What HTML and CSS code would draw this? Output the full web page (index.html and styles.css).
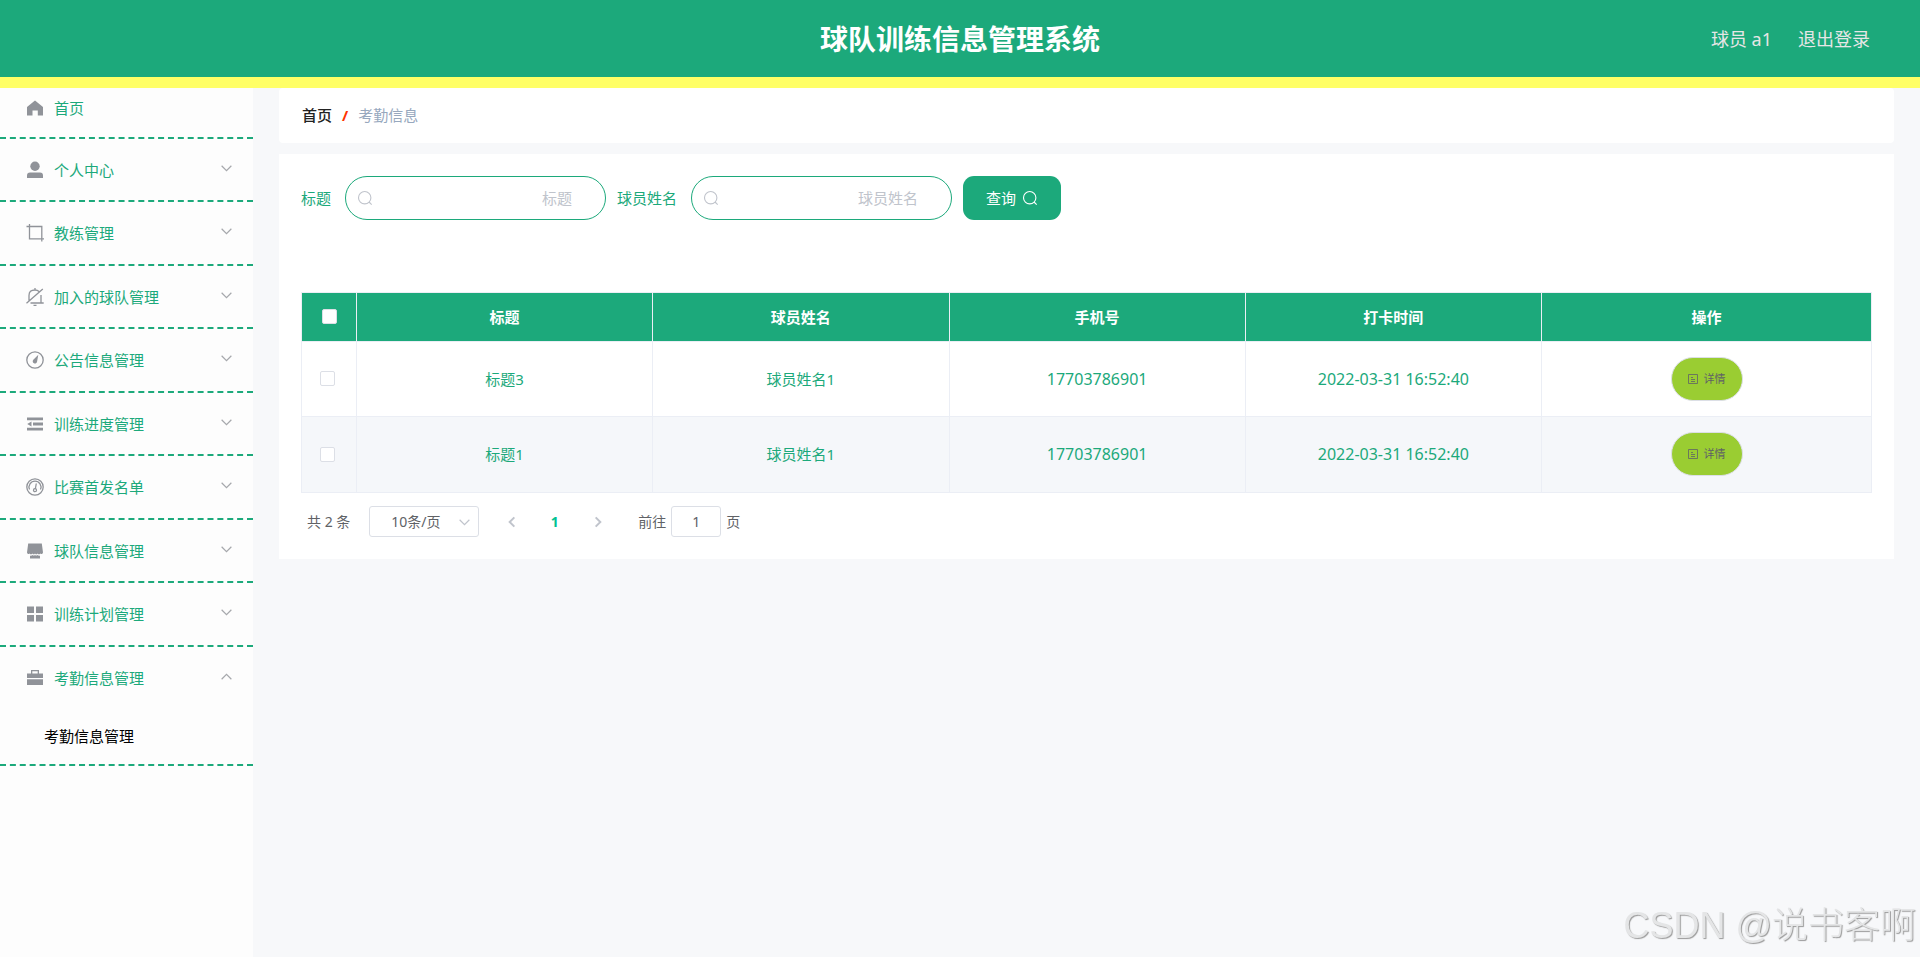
FILE: index.html
```html
<!DOCTYPE html>
<html lang="zh-CN">
<head>
<meta charset="utf-8">
<title>球队训练信息管理系统</title>
<link rel="stylesheet" href="styles.css">
</head>
<body>
<svg class="sprite" aria-hidden="true">
  <symbol id="down" viewBox="0 0 12 12"><path d="M1.500 3.500 6 8l4.500-4.500" fill="none" stroke="currentColor" stroke-width="1.100"/></symbol>
  <symbol id="chev" viewBox="0 0 12 12"><path d="M2 4 6 8l4-4" fill="none" stroke="currentColor" stroke-width="1.700"/></symbol>
  <symbol id="search" viewBox="0 0 16 16"><g fill="none" stroke="currentColor" stroke-width="1.100"><circle cx="7.700" cy="7.700" r="6.200"/><path d="m12 12 2.700 2.700"/></g></symbol>
  <symbol id="doc" viewBox="0 0 10 12"><path d="M.5 1.500h9v9h-9zM3 4.500h2M3 6.500h4M3 8.500h4" fill="none" stroke="currentColor" stroke-width=".8"/></symbol>
</svg>
<header class="header">
  <h1 class="title">球队训练信息管理系统</h1>
  <div class="account"><span>球员 a1</span><a class="logout" href="#">退出登录</a></div>
</header>
<div class="layout">
  <nav class="sidebar">
    <ul class="menu">
      <li class="item"><a class="entry" href="#"><svg class="icon" viewBox="0 0 20 20"><path d="M10 2.500 18 9v8.500h-5.200v-5H7.500v5H2V9z"/></svg><span>首页</span></a></li>
      <li class="item"><a class="entry" href="#"><svg class="icon" viewBox="0 0 20 20"><circle cx="10" cy="6.200" r="4.700"/><path d="M2 18v-2.500Q2 12.500 5 12.500h10q3 0 3 3V18z"/></svg><span>个人中心</span><svg class="arrow"><use href="#down"/></svg></a></li>
      <li class="item"><a class="entry" href="#"><svg class="icon" viewBox="0 0 20 20"><path class="line" d="M1.500 3.500h15.300v15M4.500 1v14.800h14.500"/></svg><span>教练管理</span><svg class="arrow"><use href="#down"/></svg></a></li>
      <li class="item"><a class="entry" href="#"><svg class="icon" viewBox="0 0 20 20"><path class="line" d="M4 14V8.500Q4 3 10 3q2.500 0 4 1.500M16 8v8M5.500 16h13.200M1.500 16.200 17.800 2M10 1v2M8.500 18.300h3"/></svg><span>加入的球队管理</span><svg class="arrow"><use href="#down"/></svg></a></li>
      <li class="item"><a class="entry" href="#"><svg class="icon" viewBox="0 0 20 20"><circle class="line" cx="10" cy="10" r="8.200"/><path d="m13.300 4.800-1.200 6.700a2.200 2.200 0 1 1-3.800-1.700z"/></svg><span>公告信息管理</span><svg class="arrow"><use href="#down"/></svg></a></li>
      <li class="item"><a class="entry" href="#"><svg class="icon" viewBox="0 0 20 20"><path d="M2 3.500h16v2.800H2zM8 8.600h10v2.800H8zM2 13.700h16v2.800H2zM6.500 7.500v5L2.200 10z"/></svg><span>训练进度管理</span><svg class="arrow"><use href="#down"/></svg></a></li>
      <li class="item"><a class="entry" href="#"><svg class="icon" viewBox="0 0 20 20"><circle class="line" cx="10" cy="10" r="8.200"/><path class="line" d="M4.500 12.500a6 6 0 1 1 11 0M11.300 6.500 10.300 12"/><circle class="line" cx="10" cy="13.200" r="1.500"/></svg><span>比赛首发名单</span><svg class="arrow"><use href="#down"/></svg></a></li>
      <li class="item"><a class="entry" href="#"><svg class="icon" viewBox="0 0 20 20"><path d="M3.200 2.500h13.600L18 11.500q-.8 2.500-2.700 1-1.300 1.700-2.700 0-1.300 1.700-2.600 0-1.300 1.700-2.700 0-1.300 1.700-2.700 0-1.800 1.500-2.600-1zM5 14.400q1.300.6 2.500-.4 1.300 1 2.500 0 1.300 1 2.500 0 1.300 1 2.500.4v3.100H5z"/></svg><span>球队信息管理</span><svg class="arrow"><use href="#down"/></svg></a></li>
      <li class="item"><a class="entry" href="#"><svg class="icon" viewBox="0 0 20 20"><path d="M2 2.500h7V9H2zM11 2.500h7V9h-7zM2 11h7v6.500H2zM11 11h7v6.500h-7z"/></svg><span>训练计划管理</span><svg class="arrow"><use href="#down"/></svg></a></li>
      <li class="item open"><a class="entry" href="#"><svg class="icon" viewBox="0 0 20 20"><path d="M6 2h8v3.500h4V10H2V5.500h4zm1.300 1.300v2.200h5.400V3.300zM2 11.200h16V17H2z" fill-rule="evenodd"/></svg><span>考勤信息管理</span><svg class="arrow up"><use href="#down"/></svg></a>
        <a class="sub" href="#">考勤信息管理</a></li>
    </ul>
  </nav>
  <main class="main">
    <nav class="crumbs"><a class="crumb" href="#">首页</a><span class="slash">/</span><span>考勤信息</span></nav>
    <section class="panel">
      <form class="search">
        <label class="label" for="t">标题</label>
        <div class="field"><svg class="glass"><use href="#search"/></svg><input class="input" id="t" type="text" placeholder="标题"></div>
        <label class="label" for="n">球员姓名</label>
        <div class="field"><svg class="glass"><use href="#search"/></svg><input class="input" id="n" type="text" placeholder="球员姓名"></div>
        <button class="query" type="button">查询<svg class="glass-btn"><use href="#search"/></svg></button>
      </form>
      <table class="table">
        <colgroup><col class="col-check"><col><col><col><col><col class="col-action"></colgroup>
        <thead><tr><th class="pick"><input class="check" type="checkbox" aria-label="全选"></th><th>标题</th><th>球员姓名</th><th>手机号</th><th>打卡时间</th><th>操作</th></tr></thead>
        <tbody>
          <tr><td class="pick"><input class="check" type="checkbox" aria-label="选择标题3"></td><td>标题3</td><td>球员姓名1</td><td class="num">17703786901</td><td class="num">2022-03-31 16:52:40</td><td><button class="detail" type="button"><svg class="doc"><use href="#doc"/></svg>详情</button></td></tr>
          <tr><td class="pick"><input class="check" type="checkbox" aria-label="选择标题1"></td><td>标题1</td><td>球员姓名1</td><td class="num">17703786901</td><td class="num">2022-03-31 16:52:40</td><td><button class="detail" type="button"><svg class="doc"><use href="#doc"/></svg>详情</button></td></tr>
        </tbody>
      </table>
      <div class="pager">
        <span>共 2 条</span>
        <div class="size"><select class="select" aria-label="每页条数"><option>10条/页</option></select><svg class="caret"><use href="#down"/></svg></div>
        <div class="pages">
          <button class="page" type="button" aria-label="上一页"><svg class="chev prev"><use href="#chev"/></svg></button>
          <button class="page current" type="button">1</button>
          <button class="page" type="button" aria-label="下一页"><svg class="chev next"><use href="#chev"/></svg></button>
        </div>
        <div class="jump"><label for="p">前往</label><input class="goto" id="p" type="text" value="1"><span>页</span></div>
      </div>
    </section>
  </main>
</div>
<div class="watermark">CSDN @说书客啊</div>
</body>
</html>
```
FILE: styles.css
```css
* { box-sizing: border-box; }
body {
  margin: 0;
  min-height: 100vh;
  display: flex;
  flex-direction: column;
  background: #f7f8fa;
  font: 15px/20px "Noto Sans", "Noto Sans CJK SC", sans-serif;
  color: #1ca97b;
}
a { color: inherit; text-decoration: none; }
button, input, select { font: inherit; margin: 0; }
.sprite { display: none; }

.header {
  position: relative;
  z-index: 1;
  display: grid;
  grid-template-columns: 1fr auto 1fr;
  align-items: center;
  height: 88px;
  padding: 0 50px;
  background: #1ca97b;
  border-bottom: 11px solid #ffff66;
}
.title { grid-column: 2; margin: 0; font-size: 28px; line-height: 40px; color: #fff; }
.account { display: flex; justify-content: flex-end; gap: 26px; font-size: 18px; color: #e6e6e6; }

.layout { flex: 1; display: flex; }
.sidebar { flex: none; width: 253px; background: #fdfdfd; }
.menu { list-style: none; margin: -11px 0 0; padding: 0; }
.item { height: 64px; border-bottom: 2px dashed #1ca97b; }
.item:nth-child(even) { height: 63px; }
.item:first-child { height: 62px; }
.item.open { height: auto; }
.entry { display: flex; align-items: center; gap: 9px; height: 61px; padding: 0 20px 0 25px; }
.icon { flex: none; width: 20px; height: 20px; fill: #909399; }
.line { fill: none; stroke: #909399; stroke-width: 1.3; }
.arrow { width: 13px; height: 13px; margin: 0 0 3px auto; color: #a6a8ac; }
.up { transform: rotate(180deg); }
.sub { display: flex; align-items: center; height: 56px; padding-left: 44px; color: #000; }

.main { flex: 1; min-width: 0; padding: 0 26px; }
.crumbs {
  display: flex;
  align-items: center;
  gap: 10px;
  height: 55px;
  margin-bottom: 11px;
  padding: 0 23px 2px;
  border-radius: 4px;
  background: #fff;
  color: #97a8be;
}
.crumb { font-weight: 500; color: #222; }
.slash { color: #ff3300; font-weight: 700; }
.panel { padding: 22px; background: #fff; }
.search { display: flex; align-items: center; height: 44px; margin-bottom: 72px; }
.label { margin-right: 14px; }
.field { position: relative; width: 261px; margin-right: 11px; }
.input {
  display: block;
  width: 100%;
  height: 44px;
  padding: 0 33px;
  border: 1px solid #1ca97b;
  border-radius: 22px;
  background: #fff;
  color: #1ca97b;
  text-align: right;
}
.input::placeholder { color: #c0c4cc; opacity: 1; }
.glass { position: absolute; left: 12px; top: 14px; width: 16px; height: 16px; color: #c0c4cc; }
.query {
  display: flex;
  align-items: center;
  justify-content: center;
  gap: 6px;
  width: 98px;
  height: 44px;
  padding: 0;
  border: 0;
  border-radius: 11px;
  background: #1ca97b;
  color: #fff;
}
.glass-btn { width: 16px; height: 16px; }

.table { width: 100%; table-layout: fixed; border-collapse: collapse; }
.col-check { width: 55px; }
.col-action { width: 330px; }
.table th, .table td { height: 75px; padding: 0 0 1px; border: 1px solid #ebeef5; text-align: center; }
.table th { height: 49px; background: #1ca97b; color: #fff; }
.table tr:nth-child(even) td { height: 76px; background: #f5f7fa; }
.table .num { font-size: 16px; }
.table td.pick { padding-right: 3px; }
.check {
  appearance: none;
  display: block;
  width: 15px;
  height: 15px;
  margin: 0 auto;
  border: 1px solid #dcdfe6;
  border-radius: 2px;
  background: #fff;
}
.detail {
  display: flex;
  align-items: center;
  justify-content: center;
  gap: 6px;
  width: 72px;
  height: 44px;
  margin: 0 auto;
  padding: 0;
  border: 1px solid #dcdfe6;
  border-radius: 22px;
  background: #9acd32;
  color: #606266;
  font-size: 11px;
}
.doc { width: 10px; height: 12px; }

.pager { display: flex; align-items: center; height: 31px; margin: 13px 0 0; padding-left: 6px; font-size: 14px; color: #606266; }
.size { position: relative; width: 110px; margin: 0 11px 0 19px; }
.select, .goto { display: block; height: 31px; border: 1px solid #dcdfe6; border-radius: 3px; background: #fff; color: #606266; }
.select { appearance: none; width: 100%; padding: 0 21px; }
.caret { position: absolute; right: 8px; top: 10px; width: 13px; height: 13px; color: #c0c4cc; }
.pages { display: flex; margin-right: 19px; }
.page { display: flex; align-items: center; justify-content: center; width: 43px; height: 31px; padding: 0; border: 0; background: none; color: #c0c4cc; }
.current { color: #00c292; font-weight: 700; }
.chev { width: 14px; height: 14px; }
.prev { transform: rotate(90deg); }
.next { transform: rotate(-90deg); }
.jump { display: flex; align-items: center; gap: 5px; }
.goto { width: 50px; padding: 0; text-align: center; }

.watermark {
  position: fixed;
  right: 4px;
  bottom: 4px;
  font: 300 36px/54px "Liberation Sans", "Noto Sans CJK SC", sans-serif;
  color: #e4e5e6;
  text-shadow: 1px 1px 1px #999;
}
```
